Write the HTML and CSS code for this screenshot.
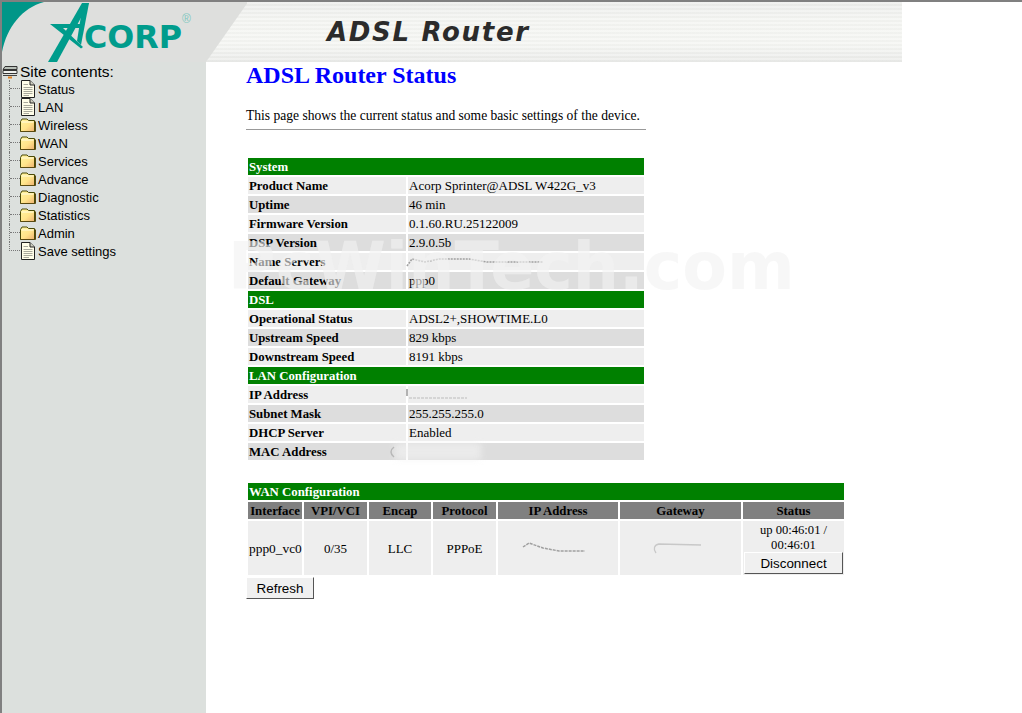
FILE: index.html
```html
<!DOCTYPE html>
<html lang="en">
<head>
<meta charset="utf-8">
<title>ADSL Router Status</title>
<link rel="stylesheet" href="styles.css">
</head>
<body>
<svg class="defs" width="0" height="0" aria-hidden="true">
  <defs>
    <linearGradient id="fold" x1="0" y1="0" x2="1" y2="1">
      <stop offset="0" stop-color="#fff4a0"/><stop offset=".55" stop-color="#ffe48a"/><stop offset="1" stop-color="#eeb070"/>
    </linearGradient>
    <symbol id="folder" viewBox="0 0 16 14">
      <path d="M.5 3.5 L2 1 H7 L8.5 2.5 H14.5 V13.5 H.5 Z" fill="url(#fold)" stroke="#4a4a08"/>
      <path d="M.5 13.5 H15.5 V3.5" fill="none" stroke="#5a4a10"/>
      <path d="M1.5 4 H13.5" stroke="#fffde0"/>
    </symbol>
    <symbol id="doc" viewBox="0 0 14 18">
      <path d="M.5 .5 H9 L13.5 5 V17.5 H.5 Z" fill="#fffde8" stroke="#222"/>
      <path d="M9 .5 V5 H13.5" fill="#cfcfc0" stroke="#222"/>
      <path d="M2.5 4.5 H7 M2.5 7.5 H11.5 M2.5 9.5 H11.5 M2.5 11.5 H11.5 M2.5 13.5 H11.5 M2.5 15.5 H8" stroke="#a8a89c"/>
    </symbol>
  </defs>
</svg>
<div class="watermark">PcWinTech.com</div>
<header class="banner">
  <svg class="logo" viewBox="2 2 245 60" width="245" height="60" role="img" aria-label="Acorp">
    <path d="M2 2 H248 L206 62 H2 Z" fill="#dedfdd"/>
    <path d="M2 2 H44 C22 8 7 27 2 52 Z" fill="#009688"/>
    <g fill="#009c8c">
      <path d="M48 62 H57 L89 3 H82 Z"/>
      <path d="M83 3 H89 L81 45 L77 41 Z"/>
      <path d="M50 24 H81 L80 28 H63 L83 47 L81 48.5 Z"/>
    </g>
    <text class="logo-text" x="84" y="47.5" textLength="98" lengthAdjust="spacingAndGlyphs">CORP</text>
    <text class="logo-mark" x="182" y="23">®</text>
  </svg>
  <div class="product">ADSL Router</div>
</header>
<div class="page">
  <nav class="sidebar">
    <div class="tree-root">
      <svg class="root-icon" viewBox="0 0 16 14" width="16" height="14">
        <path d="M3 1.5 H15 V4.5 H1 Z" fill="#b8c0b8" stroke="#333"/>
        <path d="M1 5.5 H15 V8.5 H1 Z" fill="#eef0ee" stroke="#333"/>
        <path d="M1 10.5 H15" stroke="#444"/>
        <path d="M6 12.5 H10" stroke="#e08020" stroke-width="2"/>
      </svg>
      <span>Site contents:</span>
    </div>
    <ul class="tree">
      <li><span class="branch"></span><svg class="ic-doc"><use href="#doc"/></svg><a>Status</a></li>
      <li><span class="branch"></span><svg class="ic-doc"><use href="#doc"/></svg><a>LAN</a></li>
      <li><span class="branch"></span><svg class="ic-folder"><use href="#folder"/></svg><a>Wireless</a></li>
      <li><span class="branch"></span><svg class="ic-folder"><use href="#folder"/></svg><a>WAN</a></li>
      <li><span class="branch"></span><svg class="ic-folder"><use href="#folder"/></svg><a>Services</a></li>
      <li><span class="branch"></span><svg class="ic-folder"><use href="#folder"/></svg><a>Advance</a></li>
      <li><span class="branch"></span><svg class="ic-folder"><use href="#folder"/></svg><a>Diagnostic</a></li>
      <li><span class="branch"></span><svg class="ic-folder"><use href="#folder"/></svg><a>Statistics</a></li>
      <li><span class="branch"></span><svg class="ic-folder"><use href="#folder"/></svg><a>Admin</a></li>
      <li><span class="branch"></span><svg class="ic-doc"><use href="#doc"/></svg><a>Save settings</a></li>
    </ul>
  </nav>
  <main class="content">
    <h1>ADSL Router Status</h1>
    <p class="intro">This page shows the current status and some basic settings of the device.</p>
    <hr class="rule">
    <table class="status">
      <colgroup><col class="c-label"><col class="c-value"></colgroup>
      <tr class="section"><td colspan="2">System</td></tr>
      <tr class="odd"><th>Product Name</th><td>Acorp Sprinter@ADSL W422G_v3</td></tr>
      <tr class="even"><th>Uptime</th><td>46 min</td></tr>
      <tr class="odd"><th>Firmware Version</th><td>0.1.60.RU.25122009</td></tr>
      <tr class="even"><th>DSP Version</th><td>2.9.0.5b</td></tr>
      <tr class="odd"><th>Name Servers</th><td><svg class="smudge" width="135" height="12"><path d="M-2 10 L3 3 L16 6 L30 3 L60 3 L78 6 L134 6" fill="none" stroke="#a0a0a0" stroke-width="1.6" stroke-dasharray="2 1"/></svg></td></tr>
      <tr class="even"><th>Default Gateway</th><td>ppp0</td></tr>
      <tr class="section"><td colspan="2">DSL</td></tr>
      <tr class="odd"><th>Operational Status</th><td>ADSL2+,SHOWTIME.L0</td></tr>
      <tr class="even"><th>Upstream Speed</th><td>829 kbps</td></tr>
      <tr class="odd"><th>Downstream Speed</th><td>8191 kbps</td></tr>
      <tr class="section"><td colspan="2">LAN Configuration</td></tr>
      <tr class="odd"><th>IP Address</th><td><svg class="smudge" width="60" height="12"><path d="M-2 0 V7" fill="none" stroke="#999" stroke-width="1.5"/><path d="M0 9 H58" fill="none" stroke="#bbb" stroke-width="1.2" stroke-dasharray="3 1"/></svg></td></tr>
      <tr class="even"><th>Subnet Mask</th><td>255.255.255.0</td></tr>
      <tr class="odd"><th>DHCP Server</th><td>Enabled</td></tr>
      <tr class="even"><th>MAC Address</th><td><svg class="smudge" width="90" height="12"><path class="soft" d="M-14 -3 H72 V14 H-14 Z" fill="#f4f4f4" opacity=".6"/><path d="M-15 1 C-19 4 -19 8 -15 11" fill="none" stroke="#b8b8b8" stroke-width="1.5"/></svg></td></tr>
    </table>
    <table class="wan">
      <colgroup>
        <col class="w-if"><col class="w-vpi"><col class="w-enc"><col class="w-pro"><col class="w-ip"><col class="w-gw"><col class="w-st">
      </colgroup>
      <tr class="section"><td colspan="7">WAN Configuration</td></tr>
      <tr class="head"><th>Interface</th><th>VPI/VCI</th><th>Encap</th><th>Protocol</th><th>IP Address</th><th>Gateway</th><th>Status</th></tr>
      <tr class="data">
        <td>ppp0_vc0</td><td>0/35</td><td>LLC</td><td>PPPoE</td>
        <td><svg class="smudge" width="70" height="14"><path d="M0 6 L6 2 L20 7 L36 10 L62 10" fill="none" stroke="#a0a0a0" stroke-width="1.5" stroke-dasharray="3 1"/></svg></td>
        <td><svg class="smudge" width="60" height="14"><path d="M5 12 C2 8 3 4 8 3 L50 4" fill="none" stroke="#c8c8c8" stroke-width="1.3"/></svg></td>
        <td class="st-cell"><div class="st-text">up 00:46:01 / 00:46:01</div><button class="btn btn-wide" type="button">Disconnect</button></td>
      </tr>
    </table>
    <button class="btn btn-refresh" type="button">Refresh</button>
  </main>
</div>
</body>
</html>
```
FILE: styles.css
```css
* { box-sizing: border-box; }
html, body { margin: 0; padding: 0; height: 713px; overflow: hidden; background: #fff; }
body {
  position: relative;
  display: flex;
  flex-direction: column;
  border-top: 2px solid #808080;
  border-left: 2px solid #808080;
  font-family: "Liberation Serif", serif;
  color: #000;
}
.defs { position: absolute; }
.banner {
  width: 900px;
  height: 60px;
  flex: none;
  display: flex;
  background:
    repeating-linear-gradient(180deg, rgba(255,255,255,.25) 0, rgba(255,255,255,.25) 2px, rgba(0,0,0,.012) 2px, rgba(0,0,0,.012) 4px),
    linear-gradient(180deg, #ebecea 0, #f3f4f1 30%, #f4f5f2 70%, #e9eae8 100%);
}
.logo { flex: none; display: block; }
.logo-text { font: bold 32px "DejaVu Sans", sans-serif; fill: #009c8c; }
.logo-mark { font: 12px "Liberation Sans", sans-serif; fill: #80c8c0; }
.product {
  margin: 14px 0 0 80px;
  font: italic bold 26px/32px "DejaVu Sans", sans-serif;
  letter-spacing: 1.7px;
  color: #2b2b2b;
  white-space: nowrap;
}
.page { flex: 1; display: flex; min-height: 0; }
.sidebar {
  width: 204px;
  flex: none;
  background: #dce0dd;
  font-family: "Liberation Sans", sans-serif;
}
.tree-root {
  display: flex;
  align-items: center;
  height: 17px;
  font-size: 15.5px;
  line-height: 17px;
  gap: 2px;
  margin-top: 1px;
}
.root-icon { flex: none; }
.tree { list-style: none; margin: 0 0 0 7px; padding: 0; font-size: 13px; }
.tree li {
  display: flex;
  align-items: center;
  height: 18px;
  position: relative;
  border-left: 1px dotted #777;
}
.tree li:last-child { border-left-color: transparent; }
.branch {
  width: 10px;
  height: 9px;
  align-self: flex-start;
  border-bottom: 1px dotted #777;
  flex: none;
}
.tree li:last-child .branch { border-left: 1px dotted #777; margin-left: -1px; width: 11px; }
.ic-doc { width: 14px; height: 18px; margin: 0 3px 0 1px; flex: none; }
.ic-folder { width: 16px; height: 14px; margin: 0 2px 0 0; flex: none; }
.content { padding-left: 40px; flex: 1; }
h1 { margin: 0; font-size: 24px; line-height: 27px; font-weight: bold; color: #00f; }
.intro { margin: 19px 0 0; font-size: 13.55px; line-height: 16px; white-space: nowrap; }
.rule { width: 400px; margin: 5px 0 0; height: 1px; border: 0; background: #999; }
table { border-collapse: separate; border-spacing: 2px; table-layout: fixed; font-size: 13px; line-height: 15px; }
.status { width: 400px; margin-top: 26px; }
.c-label { width: 158px; }
.c-value { width: 236px; }
td, th { padding: 1px 1px; text-align: left; overflow: hidden; }
th { font-size: 12.8px; padding: 2px 1px 0; }
.status th, .status td { height: 17px; white-space: nowrap; overflow: visible; }
.section td { background: #008000; color: #fff; font-weight: bold; font-size: 12.8px; height: 17px; padding: 2px 1px 0; }
.odd th, .odd td { background: #eee; }
.even th, .even td { background: #ddd; }
.wan { width: 600px; margin-top: 19px; }
.w-if { width: 54px; } .w-vpi { width: 63px; } .w-enc { width: 62px; } .w-pro { width: 63px; }
.w-ip { width: 120px; } .w-gw { width: 121px; }
.wan .head th { background: #808080; text-align: center; height: 17px; }
.wan .data td { background: #eee; text-align: center; padding: 0; height: 54px; }
.wan .data td:first-child { text-align: left; padding-left: 1px; white-space: nowrap; font-size: 13.4px; }
.wan .data .st-cell { vertical-align: top; }
.st-text { padding: 2px 14px 0; font-size: 12.6px; }
.btn {
  display: block;
  font: 13.4px "Liberation Sans", sans-serif;
  background: #f0f0f0;
  color: #000;
  border: 1px solid;
  border-color: #fff #555 #555 #fff;
  padding: 0;
}
.btn-wide { width: 99px; height: 22px; margin: -1px 0 0 1px; }
.btn-refresh { width: 68px; height: 22px; }
.smudge { display: block; overflow: visible; }
.smudge path { filter: blur(.4px); }
.smudge .soft { filter: blur(3px); }
.wan .smudge { margin: 0 auto; }
.watermark {
  position: absolute;
  left: 226px;
  top: 229px;
  font: bold 65px/72px "DejaVu Sans", sans-serif;
  color: rgba(242, 242, 242, .62);
  white-space: nowrap;
  z-index: 2;
  pointer-events: none;
}
```
